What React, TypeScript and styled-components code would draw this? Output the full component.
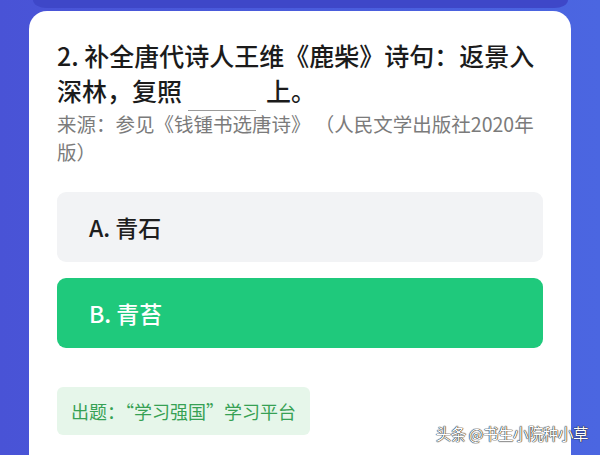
import React from "react";
import styled, { createGlobalStyle } from "styled-components";

const Global = createGlobalStyle`
  html, body { margin: 0; padding: 0; }
  body {
    width: 600px;
    height: 455px;
    overflow: hidden;
    font-family: "Noto Sans CJK SC", "Noto Sans", sans-serif;
  }
`;

const Screen = styled.div`
  position: relative;
  width: 600px;
  height: 455px;
  overflow: hidden;
  background: linear-gradient(90deg, #4953d6 0%, #4a5cdc 50%, #4b66e1 100%);
`;

const PrevCard = styled.div`
  margin: 0 32px 0 33px;
  height: 8px;
  background: #3e47c8;
  border-radius: 0 0 14px 14px / 0 0 8px 8px;
`;

const Card = styled.div`
  margin: 3px 29px 0 29px;
  height: 480px;
  background: #ffffff;
  border-radius: 18px 18px 0 0;
  padding: 27px 28px 0 28px;
  box-sizing: border-box;
  display: flex;
  flex-direction: column;
`;

const Question = styled.div`
  font-size: 25px;
  line-height: 35px;
  font-weight: 500;
  color: #1b1b1b;
`;

const Blank = styled.span`
  padding: 0 34px 2px;
  margin: 0 10px 0 6px;
  border-bottom: 1px solid #9a9a9a;
`;

const Source = styled.div`
  margin-top: 2px;
  font-size: 19.5px;
  line-height: 28px;
  color: #7b7b7b;
`;

const Options = styled.div`
  margin-top: 26px;
  display: flex;
  flex-direction: column;
  gap: 16px;
`;

const Option = styled.div<{ $selected?: boolean }>`
  height: 70px;
  border-radius: 9px;
  display: flex;
  align-items: center;
  padding-left: 32px;
  font-size: 23px;
  font-weight: 500;
  background: ${(p) => (p.$selected ? "#1fc97c" : "#f2f3f5")};
  color: ${(p) => (p.$selected ? "#ffffff" : "#1e1e1e")};
`;

const Credit = styled.div`
  margin-top: 39px;
  align-self: flex-start;
  height: 48px;
  padding: 0 14px;
  display: flex;
  align-items: center;
  background: #e6f6ea;
  border-radius: 6px;
  font-size: 18px;
  color: #36a154;
`;

const Watermark = styled.div`
  position: absolute;
  right: 12px;
  bottom: 11px;
  font-size: 15.5px;
  color: #ffffff;
  letter-spacing: -0.5px;
  text-shadow: 0 0 1px #222, 0 0 1px #222, 0 0 1px #222;
`;

export default function App() {
  return (
    <>
      <Global />
      <Screen>
        <PrevCard />
        <Card>
          <Question>
            2. 补全唐代诗人王维《鹿柴》诗句：返景入深林，复照<Blank />上。
          </Question>
          <Source>来源：参见《钱锺书选唐诗》 （人民文学出版社2020年版）</Source>
          <Options>
            <Option>A. 青石</Option>
            <Option $selected>B. 青苔</Option>
          </Options>
          <Credit>出题：“学习强国”学习平台</Credit>
        </Card>
        <Watermark>头条 @书生小院种小草</Watermark>
      </Screen>
    </>
  );
}
